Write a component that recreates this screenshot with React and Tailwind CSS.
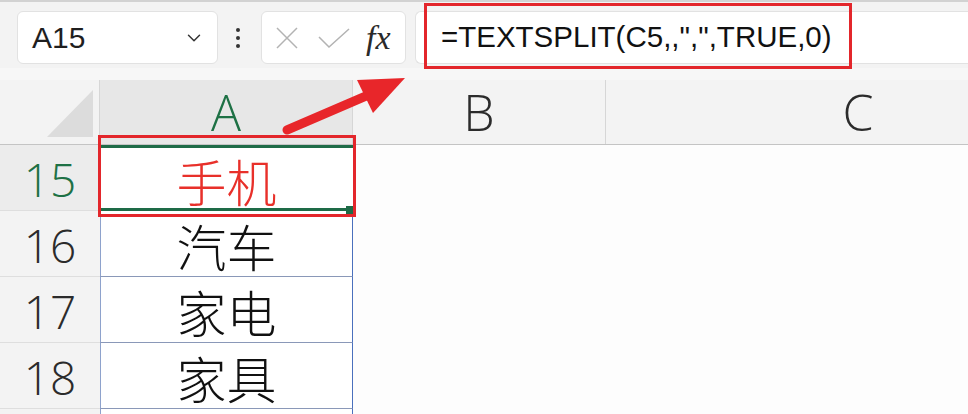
import React from 'react';
import { ChevronDown } from 'lucide-react';

const rows = [
  { n: 15, text: '手机', active: true },
  { n: 16, text: '汽车' },
  { n: 17, text: '家电' },
  { n: 18, text: '家具' },
  { n: '', text: '' },
];

const ui = { fontFamily: '"Open Sans", "Liberation Sans", sans-serif' };
const cjk = { fontFamily: '"Noto Sans CJK SC", "Noto Sans", sans-serif' };

function Toolbar() {
  return (
    <div className="h-[68px] bg-[#f3f3f3] border-t-2 border-[#d2d2d2] flex items-start pt-[9px] pl-[17px]">
      <div className="w-[201px] h-[53px] shrink-0 rounded-md bg-white border border-[#e2e2e2] flex items-center justify-between pl-[14px] pr-[12px]">
        <span className="text-[30px] text-[#1f1f1f]" style={{ fontFamily: '"Liberation Sans", sans-serif' }}>A15</span>
        <ChevronDown size={22} strokeWidth={1.6} className="text-[#333]" />
      </div>
      <div className="ml-[18px] w-[4px] h-[53px] flex flex-col items-center justify-center gap-[4px]">
        <span className="w-[4px] h-[4px] rounded-full bg-[#333]" />
        <span className="w-[4px] h-[4px] rounded-full bg-[#333]" />
        <span className="w-[4px] h-[4px] rounded-full bg-[#333]" />
      </div>
      <div className="ml-[21px] w-[145px] h-[53px] shrink-0 rounded-md bg-white border border-[#e2e2e2] flex items-center pl-[13px]">
        <svg width="24" height="24" viewBox="0 0 24 24" className="shrink-0">
          <path d="M2 2 L22 22 M22 2 L2 22" stroke="#b3b3b3" strokeWidth="1.5" fill="none" />
        </svg>
        <svg width="32" height="24" viewBox="0 0 32 24" className="ml-[19px] shrink-0">
          <path d="M1 11 L11 21 L31 3" stroke="#b3b3b3" strokeWidth="1.5" fill="none" />
        </svg>
        <span className="ml-[16px] text-[34px] italic text-[#2a2a2a] leading-none" style={{ fontFamily: '"Liberation Serif", serif' }}>fx</span>
      </div>
      <div className="ml-[9px] flex-1 h-[53px] rounded-l-md bg-white border border-r-0 border-[#e2e2e2] flex items-center pl-[25px]">
        <span className="text-[29.5px] text-[#111]" style={{ fontFamily: '"Liberation Sans", sans-serif' }}>=TEXTSPLIT(C5,,",",TRUE,0)</span>
      </div>
    </div>
  );
}

function HeaderRow() {
  return (
    <div className="flex h-[65px] border-b border-[#c4c4c4]">
      <div className="w-[100px] shrink-0 bg-[#f3f3f3] border-r border-[#d6d6d6]">
        <svg width="100" height="64" viewBox="0 0 100 64">
          <polygon points="93,10 93,57 47,57" fill="#dcdcdc" />
        </svg>
      </div>
      <div className="w-[252px] shrink-0 bg-[#e7e7e7] flex items-center justify-center text-[50px] font-light text-[#1e7145]" style={ui}>A</div>
      <div className="w-[253px] shrink-0 bg-[#f3f3f3] border-l border-[#d6d6d6] flex items-center justify-center text-[50px] font-light text-[#2b2b2b]" style={ui}>B</div>
      <div className="w-[505px] shrink-0 bg-[#f3f3f3] border-l border-[#d6d6d6] flex items-center justify-center text-[50px] font-light text-[#2b2b2b]" style={ui}>C</div>
    </div>
  );
}

function Row({ n, text, active }) {
  return (
    <div className="flex h-[66px]">
      <div
        className={`w-[100px] shrink-0 border-b border-[#dedede] flex items-center justify-center pt-[4px] text-[46px] font-light ${active ? 'bg-[#ececec] text-[#1e7145]' : 'bg-[#f3f3f3] text-[#2b2b2b]'}`}
        style={ui}
      >
        {n}
      </div>
      {active ? (
        <div className="w-[253px] shrink-0 bg-white border-y-[3px] border-[#1e6b47] flex items-center justify-center pt-[4px] text-[50px] font-light text-[#e8302a]" style={cjk}>
          {text}
        </div>
      ) : (
        <div className="w-[253px] shrink-0 bg-white border-l border-r border-b border-l-[#8ea2cc] border-r-[#4a70bd] border-b-[#8a98b8] flex items-center justify-center pt-[4px] text-[50px] font-light text-[#111]" style={cjk}>
          {text}
        </div>
      )}
      <div className="flex-1 bg-[#fdfdfd]" />
    </div>
  );
}

export default function App() {
  return (
    <div className="w-[968px] h-[414px] relative overflow-hidden bg-[#f7f7f7]">
      <Toolbar />
      <div className="h-[12px] bg-[#f7f7f7]" />
      <HeaderRow />
      {rows.map((r, i) => (
        <Row key={i} {...r} />
      ))}

      {/* fill handle */}
      <div className="absolute left-[346px] top-[206px] w-[8px] h-[9px] bg-[#1e6b47]" />

      {/* annotations */}
      <div className="absolute left-[424px] top-[3px] w-[428px] h-[66px] border-[3px] border-[#e3262b]" />
      <div className="absolute left-[98px] top-[135px] w-[258px] h-[82px] border-[3px] border-[#e3262b]" />
      <svg className="absolute left-[280px] top-[70px]" width="135" height="70" viewBox="0 0 135 70">
        <path d="M7 60 L86 26" stroke="#e8262a" strokeWidth="9" strokeLinecap="round" fill="none" />
        <polygon points="125,8 77,10 93,43" fill="#e8262a" />
      </svg>
    </div>
  );
}
